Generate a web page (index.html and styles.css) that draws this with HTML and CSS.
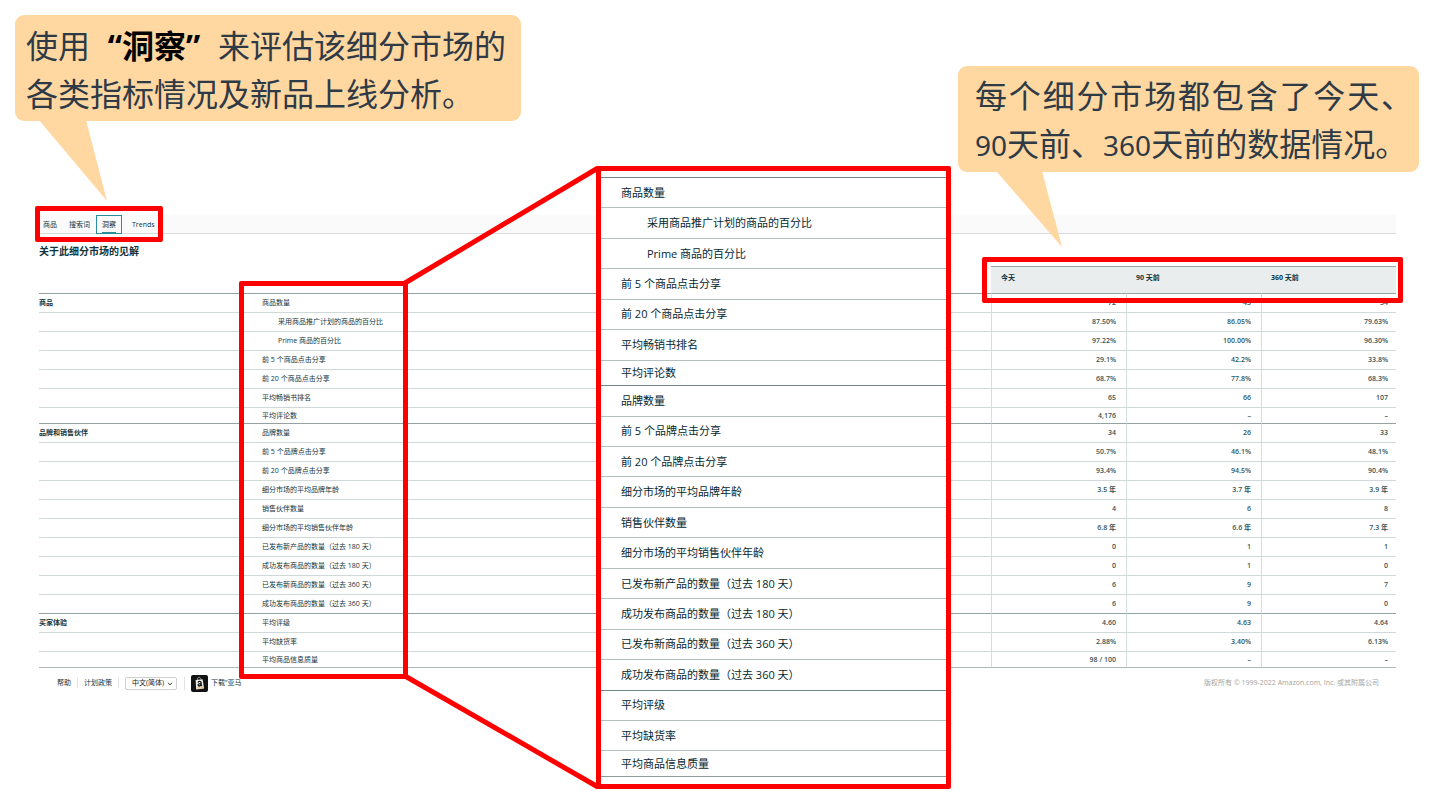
FILE: index.html
```html
<!DOCTYPE html>
<html lang="zh-CN">
<head>
<meta charset="utf-8">
<title>关于此细分市场的见解</title>
<link rel="stylesheet" href="styles.css">
</head>
<body>
<div class="slide">
  <main class="page">
    <nav class="tabs">
      <button class="tab" type="button">商品</button>
      <button class="tab" type="button">搜索词</button>
      <button class="tab tab-active" type="button"><span>洞察</span></button>
      <button class="tab tab-trends" type="button">Trends</button>
    </nav>
    <h1 class="title">关于此细分市场的见解</h1>
    <table class="insights">
      <colgroup><col class="col-group"><col><col class="col-num"><col class="col-num"><col class="col-num"></colgroup>
      <thead>
        <tr><td></td><td></td><th scope="col">今天</th><th scope="col">90 天前</th><th scope="col">360 天前</th></tr>
      </thead>
      <tbody>
        <tr class="first"><th scope="row">商品</th><td>商品数量</td><td>72</td><td>43</td><td>54</td></tr>
        <tr><th></th><td class="sub">采用商品推广计划的商品的百分比</td><td>87.50%</td><td>86.05%</td><td>79.63%</td></tr>
        <tr><th></th><td class="sub">Prime 商品的百分比</td><td>97.22%</td><td>100.00%</td><td>96.30%</td></tr>
        <tr><th></th><td>前 5 个商品点击分享</td><td>29.1%</td><td>42.2%</td><td>33.8%</td></tr>
        <tr><th></th><td>前 20 个商品点击分享</td><td>68.7%</td><td>77.8%</td><td>68.3%</td></tr>
        <tr><th></th><td>平均畅销书排名</td><td>65</td><td>66</td><td>107</td></tr>
        <tr class="last"><th></th><td>平均评论数</td><td>4,176</td><td>–</td><td>–</td></tr>
        <tr class="first"><th scope="row">品牌和销售伙伴</th><td>品牌数量</td><td>34</td><td>26</td><td>33</td></tr>
        <tr><th></th><td>前 5 个品牌点击分享</td><td>50.7%</td><td>46.1%</td><td>48.1%</td></tr>
        <tr><th></th><td>前 20 个品牌点击分享</td><td>93.4%</td><td>94.5%</td><td>90.4%</td></tr>
        <tr><th></th><td>细分市场的平均品牌年龄</td><td>3.5 年</td><td>3.7 年</td><td>3.9 年</td></tr>
        <tr><th></th><td>销售伙伴数量</td><td>4</td><td>6</td><td>8</td></tr>
        <tr><th></th><td>细分市场的平均销售伙伴年龄</td><td>6.8 年</td><td>6.6 年</td><td>7.3 年</td></tr>
        <tr><th></th><td>已发布新产品的数量（过去 180 天）</td><td>0</td><td>1</td><td>1</td></tr>
        <tr><th></th><td>成功发布商品的数量（过去 180 天）</td><td>0</td><td>1</td><td>0</td></tr>
        <tr><th></th><td>已发布新商品的数量（过去 360 天）</td><td>6</td><td>9</td><td>7</td></tr>
        <tr><th></th><td>成功发布商品的数量（过去 360 天）</td><td>6</td><td>9</td><td>0</td></tr>
        <tr class="first"><th scope="row">买家体验</th><td>平均评级</td><td>4.60</td><td>4.63</td><td>4.64</td></tr>
        <tr><th></th><td>平均缺货率</td><td>2.88%</td><td>3.40%</td><td>6.13%</td></tr>
        <tr class="last"><th></th><td>平均商品信息质量</td><td>98 / 100</td><td>–</td><td>–</td></tr>
      </tbody>
    </table>
    <footer class="footer">
      <a class="foot-link" href="#">帮助</a>
      <a class="foot-link" href="#">计划政策</a>
      <div class="lang">
        <select aria-label="语言"><option>中文(简体)</option></select>
        <svg class="chevron" viewBox="0 0 6 4"><path d="M1 .8 3 2.9 5 .8" fill="none" stroke="#333" stroke-width="1"/></svg>
      </div>
      <a class="app" href="#">
        <svg class="app-icon" viewBox="0 0 17 17">
          <rect width="17" height="17" rx="2" fill="#111"/>
          <path d="M4.6 5 11.6 4.2 13 13.4 5.2 14.4Z" fill="#f3f1ec"/>
          <path d="M6.4 4.8C6 1.8 9.6 1.4 10 4.4" fill="none" stroke="#bbb" stroke-width=".8"/>
          <path d="M7 7.4C7.6 6.1 10 6 10.1 7.6L10.3 10.4 11 11M10 8.6C7.8 8.6 6.9 9.3 7.2 10.3 7.6 11.5 9.5 11.1 10.1 9.8" fill="none" stroke="#111" stroke-width="1.3"/>
          <path d="M6.4 12.8Q9.4 13.8 12 12.1" fill="none" stroke="#e59a2c" stroke-width=".8"/>
        </svg>
        <span>下载“亚马</span>
      </a>
      <small class="copyright">版权所有 © 1999-2022 Amazon.com, Inc. 或其附属公司</small>
    </footer>
  </main>

  <svg class="connector" viewBox="0 0 200 630" aria-hidden="true">
    <path d="M4 121 197 6M4 514 197 625" fill="none" stroke="#f00" stroke-width="5"/>
  </svg>
  <div class="frame frame-tabs"></div>
  <div class="frame frame-metrics"></div>
  <div class="frame frame-periods"></div>

  <section class="frame zoom">
    <ul class="zoom-list">
      <li class="strong">商品数量</li>
      <li class="sub">采用商品推广计划的商品的百分比</li>
      <li class="sub">Prime 商品的百分比</li>
      <li>前 5 个商品点击分享</li>
      <li>前 20 个商品点击分享</li>
      <li>平均畅销书排名</li>
      <li class="short">平均评论数</li>
      <li class="strong">品牌数量</li>
      <li>前 5 个品牌点击分享</li>
      <li>前 20 个品牌点击分享</li>
      <li>细分市场的平均品牌年龄</li>
      <li>销售伙伴数量</li>
      <li>细分市场的平均销售伙伴年龄</li>
      <li>已发布新产品的数量（过去 180 天）</li>
      <li>成功发布商品的数量（过去 180 天）</li>
      <li>已发布新商品的数量（过去 360 天）</li>
      <li>成功发布商品的数量（过去 360 天）</li>
      <li class="strong">平均评级</li>
      <li>平均缺货率</li>
      <li class="short">平均商品信息质量</li>
    </ul>
  </section>

  <aside class="callout callout-left">
    <p>使用<b><span class="quote quote-open">“</span>洞察<span class="quote">”</span></b>来评估该细分市场的</p>
    <p>各类指标情况及新品上线分析。</p>
    <svg class="tail" viewBox="0 0 70 81"><path d="M0 0H47L68 81Z" fill="#ffd7a0"/></svg>
  </aside>
  <aside class="callout callout-right">
    <p class="spread">每个细分市场都包含了今天、</p>
    <p><span class="num">90</span>天前、<span class="num">360</span>天前的数据情况。</p>
    <svg class="tail" viewBox="0 0 70 81"><path d="M0 0H46L66 76Z" fill="#ffd7a0"/></svg>
  </aside>
</div>
</body>
</html>
```
FILE: styles.css
```css
* { box-sizing: border-box; }

body {
  margin: 0;
  background: #fff;
  color: #12343c;
  font-family: "Open Sans", "Noto Sans", "Noto Sans CJK SC", sans-serif;
  font-size: 7px;
  line-height: 10px;
}

button, select {
  font: inherit;
  color: inherit;
}

a {
  color: inherit;
  text-decoration: none;
}

.slide {
  position: relative;
  min-height: 799px;
  overflow: hidden;
}

.page { padding: 215px 33px 0 39px; }

/* tab bar */
.tabs {
  display: flex;
  height: 19px;
  margin-left: -2px;
  background: #fafafa;
  border-bottom: 1px solid #d9dcdc;
}

.tab {
  height: 19px;
  padding: 0 5px;
  border: 1px solid transparent;
  background: none;
}

.tab-active { border: 1px solid #2a8f9d; }

.tab-active span {
  display: block;
  margin-top: 3px;
  padding-bottom: 2px;
  border-bottom: 1px solid #2a8f9d;
}

.tab-trends { margin-left: 4px; }

.title {
  margin: 9px 0 7px;
  font-size: 10px;
  line-height: 16px;
}

/* insights table */
.insights {
  width: 100%;
  table-layout: fixed;
  border-collapse: separate;
  border-spacing: 0;
}

.col-group { width: 209px; }
.col-num { width: 135px; }

.insights td,
.insights th {
  height: 19px;
  padding: 0;
  text-align: left;
  white-space: nowrap;
}

.insights thead td { height: 27px; }

.insights thead th {
  padding: 6px 10px;
  vertical-align: top;
  background: #e9edee;
  border-top: 1px solid #98a3a4;
}

.insights tbody th,
.insights tbody td { border-top: 1px solid #d0d9d9; }

.insights tbody .first th,
.insights tbody .first td { border-top-color: #95a2a3; }

.insights tbody .last th,
.insights tbody .last td { height: 16px; }

.insights tbody tr:last-child th,
.insights tbody tr:last-child td {
  height: 17px;
  border-bottom: 1px solid #aeb8b8;
}

.insights tbody td:nth-child(2) { padding-left: 14px; }
.insights tbody td.sub { padding-left: 30px; }

.insights tbody td:nth-child(n+3) {
  padding-right: 10px;
  border-left: 1px solid #d5dddd;
  color: #34555b;
  font-weight: 600;
  text-align: right;
}

.insights tbody td:last-child { padding-right: 8px; }

/* footer */
.footer {
  display: flex;
  align-items: center;
  height: 30px;
  padding: 0 17px 0 18px;
}

.foot-link {
  margin-right: 6px;
  padding-right: 6px;
  border-right: 1px solid #e3e3e3;
}

.lang {
  position: relative;
  margin-right: 6px;
  padding-right: 7px;
  border-right: 1px solid #e3e3e3;
}

.lang select {
  width: 52px;
  height: 13px;
  padding: 0 6px;
  appearance: none;
  border: 1px solid #d0d0d0;
  border-radius: 2px;
  background: #fff;
  color: #222;
}

.chevron {
  position: absolute;
  top: 5px;
  right: 11px;
  width: 6px;
  height: 4px;
}

.app {
  display: flex;
  align-items: center;
  gap: 3px;
}

.app-icon {
  width: 17px;
  height: 17px;
}

.copyright {
  margin-left: auto;
  color: #a3a3a3;
  font-size: 7px;
}

/* annotations over the page */
.frame {
  position: absolute;
  border: 5px solid #f00;
  border-radius: 2px;
}

.frame-tabs { left: 35px; top: 206px; width: 128px; height: 36px; }
.frame-metrics { left: 239px; top: 281px; width: 169px; height: 398px; }
.frame-periods { right: 26px; top: 257px; width: 421px; height: 46px; }

.connector {
  position: absolute;
  left: 401px;
  top: 162px;
  width: 200px;
  height: 630px;
}

.zoom {
  left: 596px;
  top: 166px;
  width: 355px;
  height: 623px;
  padding: 6px 0 7px;
  background: #fff;
}

.zoom-list {
  display: flex;
  flex-direction: column;
  height: 100%;
  margin: 0;
  padding: 0;
  list-style: none;
  border-bottom: 1px solid #8d9b9c;
  color: #06272f;
  font-size: 11px;
  line-height: 16px;
}

.zoom-list li {
  display: flex;
  flex: 6 1 0;
  align-items: center;
  padding-left: 20px;
  border-top: 1px solid #b3c0c0;
}

.zoom-list .short { flex-grow: 5; }
.zoom-list .strong { border-top-color: #75878a; }
.zoom-list .sub { padding-left: 46px; }

.callout {
  position: absolute;
  height: 106px;
  padding: 5px 11px;
  border-radius: 9px;
  background: #ffd7a0;
  color: #2f3a47;
  font-family: "Noto Sans CJK SC", sans-serif;
  font-size: 32px;
  line-height: 48px;
  white-space: nowrap;
}

.callout p {
  height: 48px;
  margin: 0;
}

.callout b { color: #000; }

.callout-left { left: 15px; top: 15px; width: 506px; }
.callout-right { right: 10px; top: 66px; width: 461px; padding: 4px 6px 4px 17px; }

.callout .spread {
  white-space: normal;
  text-align: justify;
  text-align-last: justify;
}

.quote {
  display: inline-block;
  width: 32px;
  font-family: "Open Sans", sans-serif;
}

.quote-open { text-align: right; }

.num {
  font-family: "Noto Sans", sans-serif;
  font-size: 28px;
}

.tail {
  position: absolute;
  top: 105px;
  left: 24px;
  width: 70px;
  height: 81px;
}

.callout-right .tail { left: 38px; }
```
